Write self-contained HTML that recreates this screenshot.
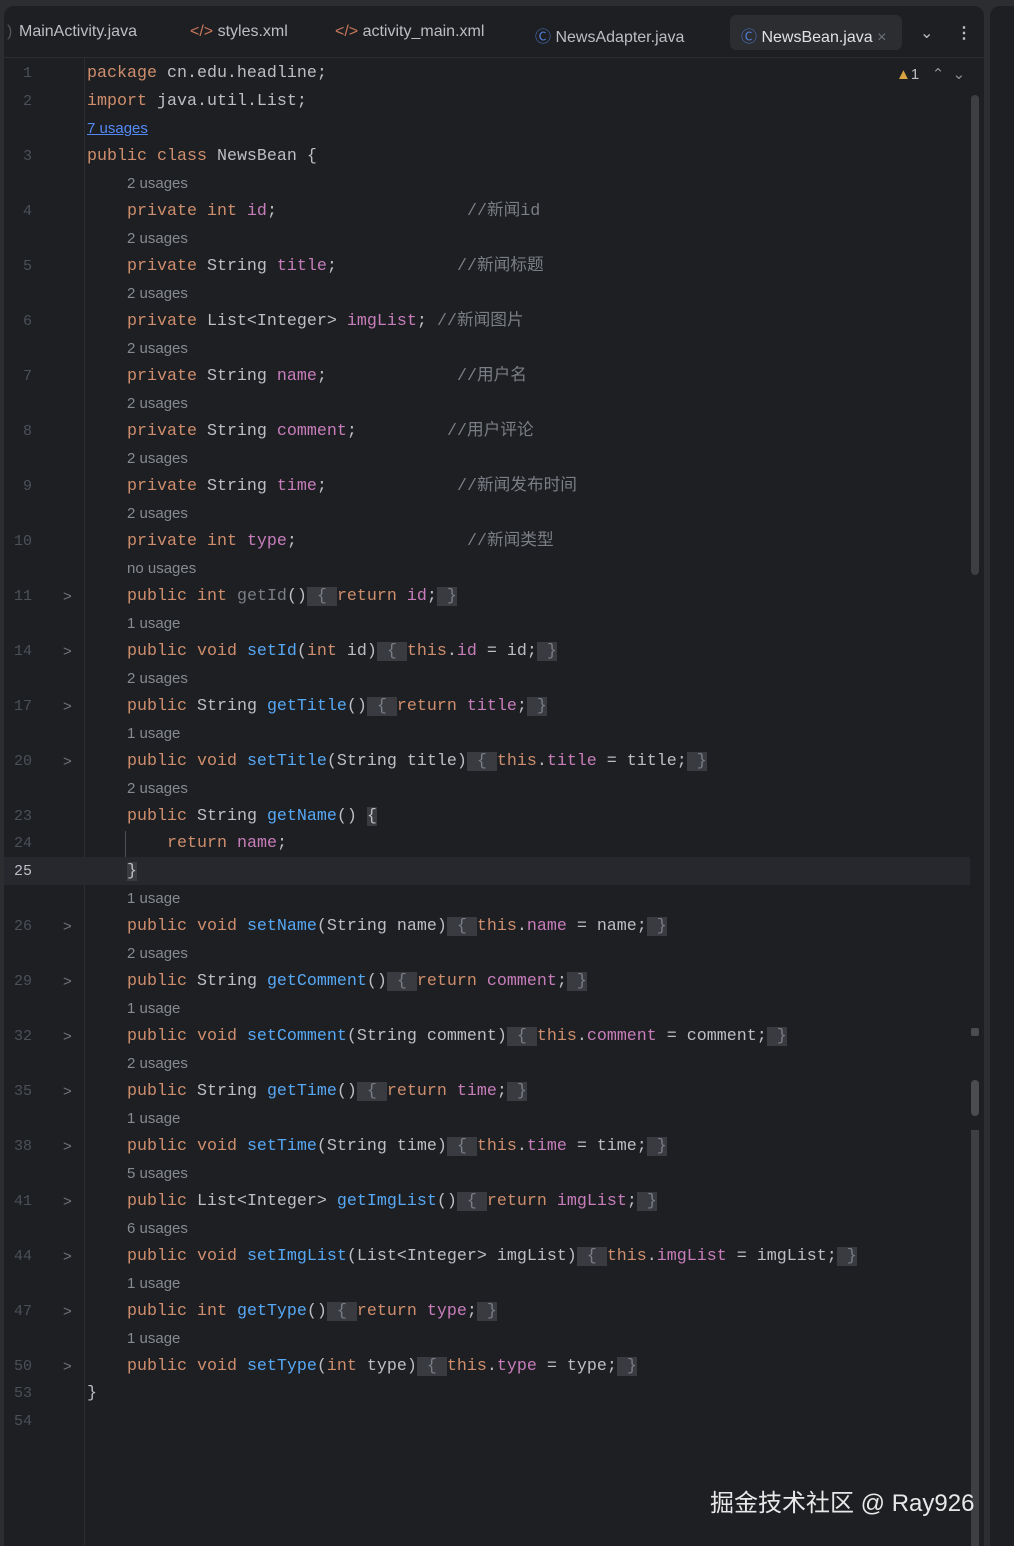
<!DOCTYPE html>
<html><head><meta charset="utf-8"><style>
*{margin:0;padding:0;box-sizing:border-box}
body{width:1014px;height:1546px;background:#2b2d30;position:relative;overflow:hidden;font-family:"Liberation Mono","Noto Sans CJK SC",monospace}
#ed{position:absolute;left:4px;top:6px;width:980px;height:1540px;background:#1e1f22;border-radius:10px 10px 0 0}
#rp{position:absolute;left:990px;top:6px;width:30px;height:1540px;background:#1e1f22;border-radius:10px 0 0 0}
.tabs{position:absolute;left:0;top:0;width:1014px;height:58px;font-family:"Liberation Sans",sans-serif;font-size:16px;color:#bcbec4}
.tab{position:absolute;top:23px;white-space:nowrap}
.sep{position:absolute;left:4px;top:57px;width:980px;height:1px;background:#2b2d30}
.row{position:absolute;left:0;width:980px;height:27.5px;line-height:27.5px;font-size:16.67px;color:#bcbec4;white-space:pre}
.ln{position:absolute;left:0;width:32px;text-align:right;color:#4b5059;font-size:15px}
.fa{position:absolute;left:63px;color:#6f737a;font-family:"Liberation Sans",sans-serif;font-size:15px}
.c{position:absolute;left:87px}
.u{position:absolute;left:127px;font-family:"Liberation Sans",sans-serif;font-size:15px;color:#868a91}
.k{color:#cf8e6d}.f{color:#c77dbb}.m{color:#56a8f5}.g{color:#7a7e85}.cm{color:#7a7e85;position:absolute}
.b{background:#393b40;color:#7a7e85}
</style></head><body>
<div id="ed"></div><div id="rp"></div>
<div class="tabs">
<div class="tab" style="left:7px;color:#555">)</div>
<div class="tab" style="left:19px">MainActivity.java</div>
<div class="tab" style="left:190px"><span style="color:#c8775a">&lt;/&gt;</span> styles.xml</div>
<div class="tab" style="left:335px"><span style="color:#c8775a">&lt;/&gt;</span> activity_main.xml</div>
<div class="tab" style="left:535px"><span style="color:#4d78cc">Ⓒ</span> NewsAdapter.java</div>
<div style="position:absolute;left:730px;top:15px;width:172px;height:35px;background:#2b2d30;border-radius:6px"></div>
<div class="tab" style="left:741px;color:#dfe1e5"><span style="color:#4d78cc">Ⓒ</span> NewsBean.java <span style="color:#6f737a">×</span></div>
<div class="tab" style="left:920px;color:#bcbec4">⌄</div>
<div class="tab" style="left:956px;font-weight:bold">⋮</div>
</div>
<div class="sep"></div>
<div style="position:absolute;left:84px;top:58px;width:1px;height:1488px;background:#2b2d30"></div>
<div style="position:absolute;left:896px;top:65px;font-family:'Liberation Sans',sans-serif;font-size:15px;color:#bcbec4"><span style="color:#d9a343">▲</span>1 &nbsp;&nbsp;<span style="color:#8c8f94">⌃ &nbsp;⌄</span></div>
<div style="position:absolute;left:971px;top:95px;width:8px;height:480px;background:#3d3f43;border-radius:4px"></div>
<div style="position:absolute;left:971px;top:1028px;width:8px;height:8px;background:#4a4c50;border-radius:2px"></div>
<div style="position:absolute;left:971px;top:1080px;width:8px;height:36px;background:#4a4c50;border-radius:4px"></div>
<div style="position:absolute;left:971px;top:1130px;width:8px;height:416px;background:#3d3f43"></div>
<div style="position:absolute;left:4px;top:857px;width:966px;height:28px;background:#26282e"></div>
<div style="position:absolute;left:125px;top:831px;width:1px;height:26px;background:#4b5059"></div>

<div class="row" style="top:60px"><span class="ln">1</span><span class="c"><span class="k">package</span> cn.edu.headline;</span></div>
<div class="row" style="top:87.5px"><span class="ln">2</span><span class="c"><span class="k">import</span> java.util.List;</span></div>
<div class="row" style="top:115px"><span class="u" style="left:87px;color:#548af7;text-decoration:underline">7 usages</span></div>
<div class="row" style="top:142.5px"><span class="ln">3</span><span class="c"><span class="k">public class</span> NewsBean {</span></div>
<div class="row" style="top:170px"><span class="u">2 usages</span></div>
<div class="row" style="top:197.5px"><span class="ln">4</span><span class="c">    <span class="k">private int</span> <span class="f">id</span>;</span><span class="cm" style="left:467px">//新闻id</span></div>
<div class="row" style="top:225px"><span class="u">2 usages</span></div>
<div class="row" style="top:252.5px"><span class="ln">5</span><span class="c">    <span class="k">private</span> String <span class="f">title</span>;</span><span class="cm" style="left:457px">//新闻标题</span></div>
<div class="row" style="top:280px"><span class="u">2 usages</span></div>
<div class="row" style="top:307.5px"><span class="ln">6</span><span class="c">    <span class="k">private</span> List&lt;Integer&gt; <span class="f">imgList</span>;</span><span class="cm" style="left:437px">//新闻图片</span></div>
<div class="row" style="top:335px"><span class="u">2 usages</span></div>
<div class="row" style="top:362.5px"><span class="ln">7</span><span class="c">    <span class="k">private</span> String <span class="f">name</span>;</span><span class="cm" style="left:457px">//用户名</span></div>
<div class="row" style="top:390px"><span class="u">2 usages</span></div>
<div class="row" style="top:417.5px"><span class="ln">8</span><span class="c">    <span class="k">private</span> String <span class="f">comment</span>;</span><span class="cm" style="left:447px">//用户评论</span></div>
<div class="row" style="top:445px"><span class="u">2 usages</span></div>
<div class="row" style="top:472.5px"><span class="ln">9</span><span class="c">    <span class="k">private</span> String <span class="f">time</span>;</span><span class="cm" style="left:457px">//新闻发布时间</span></div>
<div class="row" style="top:500px"><span class="u">2 usages</span></div>
<div class="row" style="top:527.5px"><span class="ln">10</span><span class="c">    <span class="k">private int</span> <span class="f">type</span>;</span><span class="cm" style="left:467px">//新闻类型</span></div>
<div class="row" style="top:555px"><span class="u">no usages</span></div>
<div class="row" style="top:582.5px"><span class="ln">11</span><span class="fa">&gt;</span><span class="c">    <span class="k">public int</span> <span class="g">getId</span>()<span class="b"> { </span><span class="k">return</span> <span class="f">id</span>;<span class="b"> }</span></span></div>
<div class="row" style="top:610px"><span class="u">1 usage</span></div>
<div class="row" style="top:637.5px"><span class="ln">14</span><span class="fa">&gt;</span><span class="c">    <span class="k">public void</span> <span class="m">setId</span>(<span class="k">int</span> id)<span class="b"> { </span><span class="k">this</span>.<span class="f">id</span> = id;<span class="b"> }</span></span></div>
<div class="row" style="top:665px"><span class="u">2 usages</span></div>
<div class="row" style="top:692.5px"><span class="ln">17</span><span class="fa">&gt;</span><span class="c">    <span class="k">public</span> String <span class="m">getTitle</span>()<span class="b"> { </span><span class="k">return</span> <span class="f">title</span>;<span class="b"> }</span></span></div>
<div class="row" style="top:720px"><span class="u">1 usage</span></div>
<div class="row" style="top:747.5px"><span class="ln">20</span><span class="fa">&gt;</span><span class="c">    <span class="k">public void</span> <span class="m">setTitle</span>(String title)<span class="b"> { </span><span class="k">this</span>.<span class="f">title</span> = title;<span class="b"> }</span></span></div>
<div class="row" style="top:775px"><span class="u">2 usages</span></div>
<div class="row" style="top:802.5px"><span class="ln">23</span><span class="c">    <span class="k">public</span> String <span class="m">getName</span>() <span class="b" style="color:#bcbec4">{</span></span></div>
<div class="row" style="top:830px"><span class="ln">24</span><span class="c">        <span class="k">return</span> <span class="f">name</span>;</span></div>
<div class="row" style="top:857.5px"><span class="ln" style="color:#bcbec4">25</span><span class="c">    <span class="b" style="color:#bcbec4">}</span></span></div>
<div class="row" style="top:885px"><span class="u">1 usage</span></div>
<div class="row" style="top:912.5px"><span class="ln">26</span><span class="fa">&gt;</span><span class="c">    <span class="k">public void</span> <span class="m">setName</span>(String name)<span class="b"> { </span><span class="k">this</span>.<span class="f">name</span> = name;<span class="b"> }</span></span></div>
<div class="row" style="top:940px"><span class="u">2 usages</span></div>
<div class="row" style="top:967.5px"><span class="ln">29</span><span class="fa">&gt;</span><span class="c">    <span class="k">public</span> String <span class="m">getComment</span>()<span class="b"> { </span><span class="k">return</span> <span class="f">comment</span>;<span class="b"> }</span></span></div>
<div class="row" style="top:995px"><span class="u">1 usage</span></div>
<div class="row" style="top:1022.5px"><span class="ln">32</span><span class="fa">&gt;</span><span class="c">    <span class="k">public void</span> <span class="m">setComment</span>(String comment)<span class="b"> { </span><span class="k">this</span>.<span class="f">comment</span> = comment;<span class="b"> }</span></span></div>
<div class="row" style="top:1050px"><span class="u">2 usages</span></div>
<div class="row" style="top:1077.5px"><span class="ln">35</span><span class="fa">&gt;</span><span class="c">    <span class="k">public</span> String <span class="m">getTime</span>()<span class="b"> { </span><span class="k">return</span> <span class="f">time</span>;<span class="b"> }</span></span></div>
<div class="row" style="top:1105px"><span class="u">1 usage</span></div>
<div class="row" style="top:1132.5px"><span class="ln">38</span><span class="fa">&gt;</span><span class="c">    <span class="k">public void</span> <span class="m">setTime</span>(String time)<span class="b"> { </span><span class="k">this</span>.<span class="f">time</span> = time;<span class="b"> }</span></span></div>
<div class="row" style="top:1160px"><span class="u">5 usages</span></div>
<div class="row" style="top:1187.5px"><span class="ln">41</span><span class="fa">&gt;</span><span class="c">    <span class="k">public</span> List&lt;Integer&gt; <span class="m">getImgList</span>()<span class="b"> { </span><span class="k">return</span> <span class="f">imgList</span>;<span class="b"> }</span></span></div>
<div class="row" style="top:1215px"><span class="u">6 usages</span></div>
<div class="row" style="top:1242.5px"><span class="ln">44</span><span class="fa">&gt;</span><span class="c">    <span class="k">public void</span> <span class="m">setImgList</span>(List&lt;Integer&gt; imgList)<span class="b"> { </span><span class="k">this</span>.<span class="f">imgList</span> = imgList;<span class="b"> }</span></span></div>
<div class="row" style="top:1270px"><span class="u">1 usage</span></div>
<div class="row" style="top:1297.5px"><span class="ln">47</span><span class="fa">&gt;</span><span class="c">    <span class="k">public int</span> <span class="m">getType</span>()<span class="b"> { </span><span class="k">return</span> <span class="f">type</span>;<span class="b"> }</span></span></div>
<div class="row" style="top:1325px"><span class="u">1 usage</span></div>
<div class="row" style="top:1352.5px"><span class="ln">50</span><span class="fa">&gt;</span><span class="c">    <span class="k">public void</span> <span class="m">setType</span>(<span class="k">int</span> type)<span class="b"> { </span><span class="k">this</span>.<span class="f">type</span> = type;<span class="b"> }</span></span></div>
<div class="row" style="top:1380px"><span class="ln">53</span><span class="c">}</span></div>
<div class="row" style="top:1407.5px"><span class="ln">54</span></div>

<div style="position:absolute;left:710px;top:1483px;font-family:'Liberation Sans','Noto Sans CJK SC',sans-serif;font-size:24px;color:#e8e8e8;white-space:nowrap">掘金技术社区 @ Ray926</div>
</body></html>
